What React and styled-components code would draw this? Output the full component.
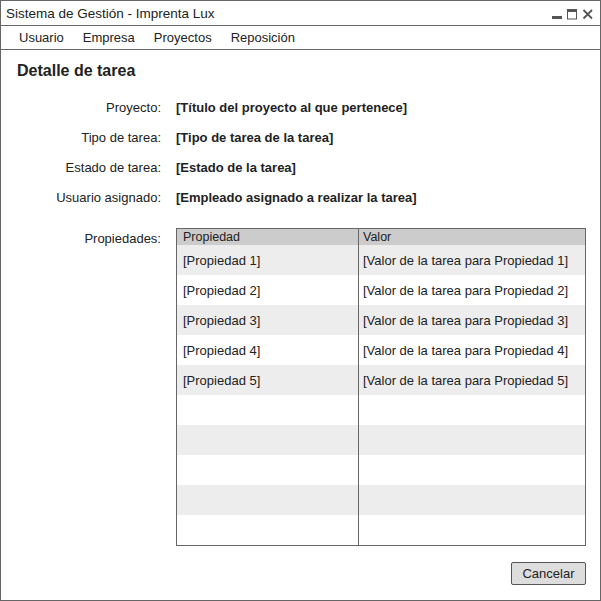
import React from 'react';
import styled, { createGlobalStyle } from 'styled-components';

const GlobalStyle = createGlobalStyle`
  html, body { margin: 0; padding: 0; background: #fff; }
  body { font-family: "Liberation Sans", Arial, sans-serif; color: #222; }
`;

const Window = styled.div`
  width: 601px;
  height: 601px;
  box-sizing: border-box;
  border: 1px solid #666;
  display: flex;
  flex-direction: column;
  background: #fff;
`;

const TitleBar = styled.div`
  height: 24px;
  border-bottom: 1px solid #666;
  display: flex;
  align-items: center;
  justify-content: space-between;
  padding: 0 6px 0 5px;
  font-size: 13.5px;
`;

const Controls = styled.div`
  display: flex;
  align-items: center;
  gap: 4px;
  margin-top: 2px;
`;

const MenuBar = styled.div`
  height: 23px;
  border-bottom: 1px solid #666;
  display: flex;
  align-items: center;
  padding-left: 18px;
  gap: 19px;
  font-size: 13px;
  padding-bottom: 1px;
  box-sizing: border-box;
  height: 24px;
`;

const Content = styled.div`
  flex: 1;
  display: flex;
  flex-direction: column;
  padding: 11px 14px 15px 0;
`;

const Heading = styled.h1`
  margin: 0 0 0 16px;
  font-size: 16px;
  font-weight: bold;
  line-height: 19px;
`;

const Form = styled.div`
  margin-top: 12px;
  display: grid;
  grid-template-columns: 160px 1fr;
  grid-auto-rows: 30px;
  column-gap: 15px;
  font-size: 13px;
`;

const Label = styled.div`
  text-align: right;
  align-self: ${p => (p.$top ? 'start' : 'center')};
  padding-top: ${p => (p.$top ? '3px' : '0')};
`;

const Value = styled.div`
  align-self: center;
  font-weight: bold;
`;

const PropsRow = styled.div`
  display: grid;
  grid-template-columns: 160px 1fr;
  column-gap: 15px;
  margin-top: 16px;
  font-size: 13px;
`;

const Table = styled.div`
  border: 1px solid #666;
  display: grid;
  grid-template-columns: 182px 1fr;
  grid-template-rows: 16px;
  grid-auto-rows: 30px;
`;

const Cell = styled.div`
  display: flex;
  align-items: center;
  padding-left: ${p => (p.$first ? '6px' : '4px')};
  border-right: ${p => (p.$first ? '1px solid #666' : 'none')};
  background: ${p => (p.$head ? '#cccccc' : p.$shade ? '#ededed' : '#fff')};
  font-size: ${p => (p.$head ? '12.5px' : '13px')};
  white-space: nowrap;
  overflow: hidden;
`;

const Footer = styled.div`
  margin-top: auto;
  display: flex;
  justify-content: flex-end;
`;

const Button = styled.button`
  width: 75px;
  height: 23px;
  border: 1px solid #555;
  border-radius: 2px;
  background: #dddddd;
  font-family: inherit;
  font-size: 13px;
  color: #222;
  padding: 0;
`;

const fields = [
  ['Proyecto:', '[Título del proyecto al que pertenece]'],
  ['Tipo de tarea:', '[Tipo de tarea de la tarea]'],
  ['Estado de tarea:', '[Estado de la tarea]'],
  ['Usuario asignado:', '[Empleado asignado a realizar la tarea]'],
];

const rows = Array.from({ length: 10 }, (_, i) =>
  i < 5 ? [`[Propiedad ${i + 1}]`, `[Valor de la tarea para Propiedad ${i + 1}]`] : ['', '']
);

const WindowIcons = () => (
  <Controls>
    <svg width="11" height="10" viewBox="0 0 11 10">
      <rect x="0" y="7" width="10" height="3" fill="#555" />
    </svg>
    <svg width="11" height="11" viewBox="0 0 11 11">
      <rect x="0.5" y="0.5" width="9" height="9.5" fill="none" stroke="#555" />
      <rect x="0.5" y="0.5" width="9" height="2.5" fill="#555" />
    </svg>
    <svg width="12" height="11" viewBox="0 0 12 11">
      <path d="M1.5 1 L10 9.5 M10 1 L1.5 9.5" stroke="#555" strokeWidth="1.8" />
    </svg>
  </Controls>
);

export default function App() {
  return (
    <>
      <GlobalStyle />
      <Window>
        <TitleBar>
          <span>Sistema de Gestión - Imprenta Lux</span>
          <WindowIcons />
        </TitleBar>
        <MenuBar>
          <span>Usuario</span>
          <span>Empresa</span>
          <span>Proyectos</span>
          <span>Reposición</span>
        </MenuBar>
        <Content>
          <Heading>Detalle de tarea</Heading>
          <Form>
            {fields.map(([l, v]) => (
              <React.Fragment key={l}>
                <Label>{l}</Label>
                <Value>{v}</Value>
              </React.Fragment>
            ))}
          </Form>
          <PropsRow>
            <Label $top>Propiedades:</Label>
            <Table>
              <Cell $head $first>Propiedad</Cell>
              <Cell $head>Valor</Cell>
              {rows.map(([a, b], i) => (
                <React.Fragment key={i}>
                  <Cell $first $shade={i % 2 === 0}>{a}</Cell>
                  <Cell $shade={i % 2 === 0}>{b}</Cell>
                </React.Fragment>
              ))}
            </Table>
          </PropsRow>
          <Footer>
            <Button>Cancelar</Button>
          </Footer>
        </Content>
      </Window>
    </>
  );
}
